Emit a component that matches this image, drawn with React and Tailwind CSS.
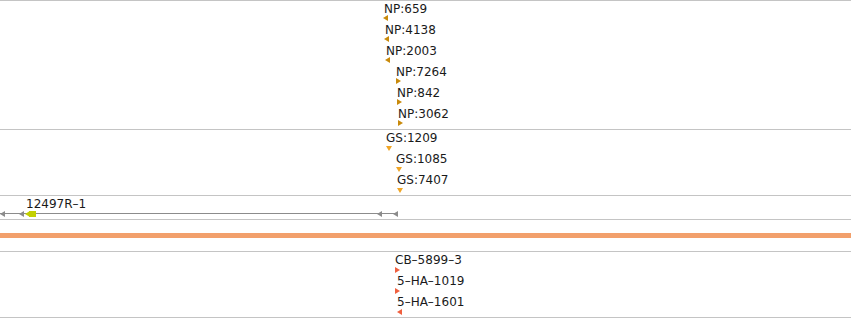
import React from "react"

const npRows = [
  { label: "NP:659", x: 384, tx: 383, dir: "left" },
  { label: "NP:4138", x: 385, tx: 384, dir: "left" },
  { label: "NP:2003", x: 386, tx: 385, dir: "left" },
  { label: "NP:7264", x: 396, tx: 396, dir: "right" },
  { label: "NP:842", x: 397, tx: 397, dir: "right" },
  { label: "NP:3062", x: 398, tx: 398, dir: "right" },
]

const gsRows = [
  { label: "GS:1209", x: 386, tx: 386, dir: "down" },
  { label: "GS:1085", x: 396, tx: 396, dir: "down" },
  { label: "GS:7407", x: 397, tx: 397, dir: "down" },
]

const cbRows = [
  { label: "CB–5899–3", x: 395, tx: 395, dir: "right" },
  { label: "5–HA–1019", x: 397, tx: 395, dir: "right" },
  { label: "5–HA–1601", x: 397, tx: 397, dir: "left" },
]

function Tri({ dir, color }) {
  const pts =
    dir === "left" ? "5,0 5,6 0,3" : dir === "right" ? "0,0 0,6 5,3" : "0,0 6,0 3,5"
  const w = dir === "down" ? 6 : 5
  const h = dir === "down" ? 5 : 6
  return (
    <svg className="block shrink-0" width={w} height={h}>
      <polygon points={pts} fill={color} />
    </svg>
  )
}

// one feature: label with its strand mark under it, shifted to its genome position
function Feature({ row, color, labelH }) {
  return (
    <div className="h-[21px] flex flex-col" style={{ paddingLeft: Math.min(row.x, row.tx) }}>
      <div
        className={`${labelH} leading-[14px] text-[12px] text-[#1a1a1a] whitespace-nowrap`}
        style={{ marginLeft: row.x - Math.min(row.x, row.tx) }}
      >
        {row.label}
      </div>
      <div style={{ marginLeft: row.tx - Math.min(row.x, row.tx) }}>
        <Tri dir={row.dir} color={color} />
      </div>
    </div>
  )
}

export default function App() {
  return (
    <div className="w-[851px] h-[318px] bg-white font-['DejaVu_Sans',sans-serif] overflow-hidden">
      {/* NP track */}
      <div className="h-[129px] border-t border-[#c4c4c4] pt-px flex flex-col">
        {npRows.map((r) => (
          <Feature key={r.label} row={r} color="#c98a0b" labelH="h-[13px]" />
        ))}
      </div>

      {/* GS track */}
      <div className="h-[66px] border-t border-[#c4c4c4] pt-px flex flex-col">
        {gsRows.map((r) => (
          <Feature key={r.label} row={r} color="#f0a526" labelH="h-[15px]" />
        ))}
      </div>

      {/* transcript track */}
      <div className="relative h-[24px] border-t border-[#c4c4c4]">
        <span className="absolute left-[26px] top-px text-[12px] leading-[14px] text-[#1a1a1a]">12497R–1</span>
        <div className="absolute left-0 top-[15px] w-[398px] h-[6px] flex items-center">
          <div className="absolute inset-x-0 top-[2px] h-px bg-[#8c8c8c]" />
          <div className="relative flex items-center">
            <Tri dir="left" color="#8c8c8c" />
            <div className="w-[14px]" />
            <Tri dir="left" color="#8c8c8c" />
            <div className="w-px" />
            <Tri dir="left" color="#c3d000" />
            <div className="w-[7px] h-[6px] bg-[#c3d000] -ml-px" />
          </div>
          <div className="relative ml-auto flex items-center">
            <Tri dir="left" color="#8c8c8c" />
            <div className="w-[11px]" />
            <Tri dir="left" color="#8c8c8c" />
          </div>
        </div>
      </div>

      {/* sequence band */}
      <div className="h-[32px] border-t border-[#c4c4c4] pt-[13px]">
        <div className="h-[5px] bg-[#f2a06c]" />
      </div>

      {/* CB track */}
      <div className="h-[67px] border-t border-b border-[#c4c4c4] pt-px flex flex-col">
        {cbRows.map((r) => (
          <Feature key={r.label} row={r} color="#f0603f" labelH="h-[14px]" />
        ))}
      </div>
    </div>
  )
}
